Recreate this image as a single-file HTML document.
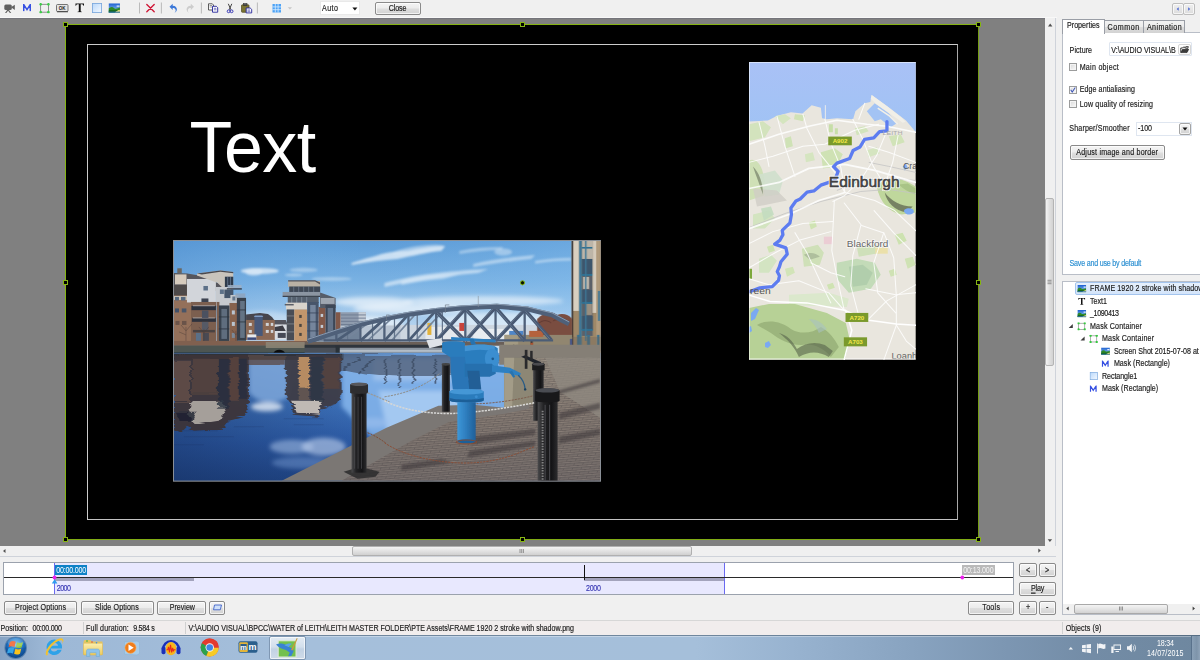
<!DOCTYPE html>
<html><head><meta charset="utf-8"><title>Objects and animation</title>
<style>
*{box-sizing:border-box;margin:0;padding:0}
html,body{width:1200px;height:660px;overflow:hidden;background:#f0f0f0}
body{position:relative;font-family:"Liberation Sans",sans-serif;font-size:7.1px;color:#1a1a1a;line-height:1}
.a{position:absolute}
.t{position:absolute;white-space:nowrap;line-height:10px;height:10px;-webkit-text-stroke:.15px currentColor;margin-top:.65px;transform:scaleY(1.180);transform-origin:0 50%}
.btn{position:absolute;border:1px solid #8a8a8a;border-radius:2px;background:linear-gradient(#f4f4f4 0%,#ececec 48%,#dedede 52%,#d2d2d2 100%);box-shadow:inset 0 0 0 1px rgba(255,255,255,.7)}
.cb{position:absolute;width:8px;height:8px;border:1px solid #9b9c9c;background:linear-gradient(135deg,#d8d8d8,#fbfbfb);box-shadow:inset 0 0 0 1px #f4f4f4}
svg{position:absolute;overflow:visible}
</style></head><body>

<svg width="0" height="0" style="position:absolute"><defs>
<linearGradient id="gSky" x1="0" y1="0" x2="0" y2="1"><stop offset="0" stop-color="#1d5fd0"/><stop offset="1" stop-color="#9fd4f6"/></linearGradient>
<linearGradient id="gRect" x1="0" y1="0" x2="1" y2="1"><stop offset="0" stop-color="#b9d8fb"/><stop offset="1" stop-color="#f4f9ff"/></linearGradient>
<symbol id="iPic" viewBox="0 0 12 10"><rect x="0" y="0" width="12" height="10" fill="url(#gSky)"/><path d="M0 5.500C2 3.500 4 3.300 6 5.200 8 6.500 10 5 12 4.500V10H0z" fill="#2f8a2a"/><path d="M0 7.500C3 6.500 6 8.500 12 6.500V10H0z" fill="#12641a"/><path d="M6.500 10C8 8 10 7 12 6.800V10z" fill="#e6e07a"/><rect x="0" y="8.800" width="12" height="1.200" fill="#3573c9"/><path d="M8.500 2.200h3v1.500h-3z" fill="#fff" opacity=".85"/></symbol>
<symbol id="iMC" viewBox="0 0 12 12"><rect x="1.500" y="1.500" width="9" height="9" fill="none" stroke="#8a8a8a" stroke-width="1"/><g fill="#35c93f"><rect x="0" y="0" width="3" height="3" rx=".8"/><rect x="9" y="0" width="3" height="3" rx=".8"/><rect x="0" y="9" width="3" height="3" rx=".8"/><rect x="9" y="9" width="3" height="3" rx=".8"/></g></symbol>
<symbol id="iMCs" viewBox="0 0 12 12"><rect x="1.500" y="1.500" width="9" height="9" fill="none" stroke="#808080" stroke-width="1"/><g fill="#3ccc48"><circle cx="1.500" cy="1.500" r="1.550"/><circle cx="10.500" cy="1.500" r="1.550"/><circle cx="1.500" cy="10.500" r="1.550"/><circle cx="10.500" cy="10.500" r="1.550"/></g></symbol>
<symbol id="iRect" viewBox="0 0 12 12"><rect x=".5" y=".5" width="11" height="11" fill="url(#gRect)" stroke="#7aa7dd" stroke-width="1"/></symbol>
<symbol id="iM" viewBox="0 0 10 9"><path d="M1.100 8.600V.7L5 6.800 8.900.7V8.600" fill="none" stroke="#3650e2" stroke-width="1.750" stroke-linejoin="miter"/></symbol>
<symbol id="iT" viewBox="0 0 10 10"><path d="M.5.500h9v2.500h-.6C8.600 1.700 8.100 1.300 6 1.300v6.900c0 .8.300 1 1.400 1.100v.5H2.600v-.5C3.700 9.200 4 9 4 8.200V1.300C1.900 1.300 1.400 1.700 1.100 3H.5z" fill="#111"/></symbol>
</defs></svg>

<!-- canvas pane -->
<div class="a" style="left:0;top:18px;width:1045px;height:528px;background:#808080"></div>
<div class="a" style="left:0;top:17px;width:1057px;height:1px;background:#f8f8f8"></div>
<div class="a" style="left:0;top:18px;width:1045px;height:1px;background:#75757b"></div>
<!-- scrollbars of canvas pane -->
<div class="a" style="left:1045px;top:18px;width:11px;height:539px;background:#f0f0f0;border-right:1px solid #cfd3da"></div>
<div class="a" style="left:0;top:546px;width:1056px;height:11px;background:#f0f0f0;border-bottom:1px solid #cfd3da"></div>
<div class="a" style="left:1045px;top:198px;width:9px;height:168px;border:1px solid #b4b4b4;border-radius:2px;background:linear-gradient(90deg,#f3f3f3,#e0e0e0 50%,#d2d2d2)"></div>
<div class="a" style="left:352px;top:546px;width:340px;height:10px;border:1px solid #b0b0b0;border-radius:2px;background:linear-gradient(#f3f3f3,#e2e2e2 50%,#d0d0d0)"></div>
<svg style="left:0;top:0" width="1200" height="660" viewBox="0 0 1200 660">
 <g fill="#505050">
  <path d="M1048 26.5l2.2-3 2.2 3z"/>
  <path d="M1047.7 539.3l2.2 2.6 2.2-2.6z"/>
  <path d="M3 551l2.5-2v4z"/>
  <path d="M1040.8 550.6l-2.5-2.2v4.4z"/>
 </g>
 <g stroke="#707070" stroke-width=".7">
  <path d="M1047.5 280.3h4M1047.5 282h4M1047.5 283.7h4"/>
  <path d="M520 549v4M521.7 549v4M523.4 549v4"/>
 </g>
</svg>

<!-- toolbar -->
<svg style="left:0;top:0" width="440" height="18" viewBox="0 0 440 18">
 <!-- camera -->
 <g fill="#606060"><rect x="4.300" y="4.500" width="7.500" height="5.500" rx="1.500"/><path d="M11 7.300l3.800-2.600v5.200L11 7.300z"/><path d="M7.500 9.500h1.200l2.500 3.600h-1.300L8.100 10.700 6.300 13.100H5z"/></g>
 <use href="#iM" x="22.500" y="4" width="9" height="7.500"/>
 <use href="#iMCs" x="39.300" y="3" width="10.500" height="10.500"/>
 <!-- ok button -->
 <rect x="56.500" y="4.500" width="11.500" height="7" rx="1" fill="#e4e4e4" stroke="#555" stroke-width=".8"/><path d="M57 11.800h11" stroke="#333" stroke-width=".8"/><text x="62.200" y="10" font-size="4.500" font-weight="bold" text-anchor="middle" fill="#222" font-family="Liberation Sans">OK</text>
 <use href="#iT" x="75" y="3" width="9.500" height="9.500"/>
 <use href="#iRect" x="92" y="3" width="10" height="10"/>
 <use href="#iPic" x="108.500" y="3.300" width="11.500" height="9.500"/>
 <g stroke="#b4b4b4" stroke-width=".9"><path d="M139.500 2.500v11M161.400 2.500v11M201.400 2.500v11M257.400 2.500v11"/></g>
 <!-- X -->
 <path d="M146.800 4.500l7.400 7.300M154.200 4.500l-7.400 7.300" stroke="#cf1736" stroke-width="1.350" stroke-linecap="round"/>
 <!-- undo -->
 <path d="M169.500 6.800l3.200-3v1.900c3 .1 4.300 1.700 4.200 3.900-.1 1.600-1 2.800-2.600 3.400 1.200-1 1.500-2 1.300-3-.3-1.300-1.300-1.900-2.900-1.900v1.900z" fill="#3b78d8"/>
 <path d="M194 6.800l-3.200-3v1.900c-3 .1-4.300 1.700-4.200 3.900.1 1.600 1 2.800 2.600 3.400-1.200-1-1.500-2-1.300-3 .3-1.300 1.300-1.900 2.900-1.900v1.900z" fill="#cdcdcd"/>
 <!-- copy -->
 <g><path d="M208.500 3.800h3.800l1.200 1.200v5h-5z" fill="#fff" stroke="#333" stroke-width=".8"/><path d="M209.600 5.500h2.500M209.600 7h2.500" stroke="#555" stroke-width=".6"/><path d="M212.500 6.300h3.800l1.400 1.400v4.500h-5.200z" fill="#fff" stroke="#22229a" stroke-width=".9"/><path d="M213.800 8.300h2.500M213.800 9.800h2.700" stroke="#22229a" stroke-width=".6"/></g>
 <!-- scissors -->
 <g fill="none"><path d="M228.300 3.800l2.600 6M231.800 3.800l-2.600 6" stroke="#333" stroke-width=".9"/><circle cx="228.600" cy="11.300" r="1.400" stroke="#2a2ab0" stroke-width=".9"/><circle cx="231.600" cy="11.300" r="1.400" stroke="#2a2ab0" stroke-width=".9"/></g>
 <!-- paste -->
 <g><rect x="241.500" y="4.800" width="7.500" height="7.500" rx=".8" fill="#7b7432" stroke="#4a4520" stroke-width=".7"/><rect x="243.500" y="3.600" width="3.500" height="2" fill="#555" stroke="#222" stroke-width=".5"/><path d="M246.200 8h4l1.500 1.400v3.500h-5.500z" fill="#fff" stroke="#22229a" stroke-width=".9"/><path d="M247.500 10h2.500M247.500 11.300h2.800" stroke="#22229a" stroke-width=".6"/></g>
 <!-- grid -->
 <g><rect x="272.500" y="4" width="8.500" height="8.500" fill="#4da2f5"/><path d="M272.500 6.900h8.500M272.500 9.700h8.500M275.300 4v8.500M278.100 4v8.500" stroke="#d8ecff" stroke-width=".8"/></g>
 <path d="M287.800 7.200h4.200l-2.100 2.200z" fill="#c6c6c6"/>
</svg>
<div class="a" style="left:320px;top:1px;width:40px;height:14px;background:#fff;border:1px solid #e9e9e9"></div>
<svg style="left:352px;top:6.500px" width="6" height="4" viewBox="0 0 6 4"><path d="M.4.400h5L2.900 3.400z" fill="#111"/></svg>
<div class="btn" style="left:375px;top:2px;width:46px;height:13px"></div>

<!-- right panel: nav buttons -->
<div class="btn" style="left:1172px;top:3px;width:12px;height:12px;border-color:#bdbdbd;background:linear-gradient(#efefef,#dcdcdc)"></div>
<div class="btn" style="left:1183px;top:3px;width:12px;height:12px;border-color:#bdbdbd;background:linear-gradient(#efefef,#dcdcdc)"></div>
<svg style="left:0;top:0" width="1200" height="40" viewBox="0 0 1200 40"><g fill="#4a66d2"><path d="M1176.700 9l2-1.700v3.400z"/><path d="M1190.200 9l-2-1.700v3.400z"/></g></svg>
<!-- tab panel -->
<div class="a" style="left:1062px;top:32px;width:140px;height:243px;background:#fff;border:1px solid #b9bec7"></div>
<div class="a" style="left:1104px;top:20px;width:40px;height:13px;border:1px solid #9a9ea6;border-bottom:none;background:linear-gradient(#f2f2f2,#ebebeb 50%,#dcdcdc 52%,#d3d3d3)"></div>
<div class="a" style="left:1143px;top:20px;width:42px;height:13px;border:1px solid #9a9ea6;border-bottom:none;background:linear-gradient(#f2f2f2,#ebebeb 50%,#dcdcdc 52%,#d3d3d3)"></div>
<div class="a" style="left:1062px;top:19px;width:43px;height:15px;border:1px solid #9a9ea6;border-bottom:none;background:#fff"></div>
<!-- picture input -->
<div class="a" style="left:1109px;top:42px;width:83px;height:14px;background:#fff;border:1px solid #dfe6f0;border-radius:1px"></div>
<div class="btn" style="left:1177.500px;top:43.500px;width:13px;height:11.500px;border-color:#d6d6d6;background:linear-gradient(#fefefe,#f1f1f1)"></div>
<svg style="left:1179.500px;top:44.800px" width="9.500" height="8.500" viewBox="0 0 10 9"><path d="M.8 8V3.200h1.800l.8-.9h2V3.200H7.600v1.300" fill="#fff" stroke="#1a1a1a" stroke-width=".9"/><path d="M.9 8l1.800-3.500h6.500L7.400 8z" fill="#3a3a3a" stroke="#111" stroke-width=".6"/><path d="M5.300 2c1-1.300 2.300-1.400 3.200-.4l.6-.5v1.800H7.400l.6-.6c-.6-.7-1.500-.7-2.300-.1z" fill="#222"/></svg>
<!-- checkboxes -->
<div class="cb" style="left:1069px;top:63px"></div>
<div class="cb" style="left:1069px;top:85.500px"></div>
<div class="cb" style="left:1069px;top:99.500px"></div>
<svg style="left:1069px;top:85.500px" width="8" height="8" viewBox="0 0 8 8"><path d="M1.700 3.700l1.500 2.300L6.300 1.500" fill="none" stroke="#4058b8" stroke-width="1.050"/></svg>
<!-- sharper combo -->
<div class="a" style="left:1136px;top:121.500px;width:56px;height:14px;background:#fff;border:1px solid #dfe6f0"></div>
<div class="btn" style="left:1179px;top:122.500px;width:12px;height:12px;border-color:#a4a4a4"></div>
<svg style="left:1182px;top:127px" width="6" height="4" viewBox="0 0 6 4"><path d="M.5.500h5L3 3.500z" fill="#111"/></svg>
<!-- adjust button -->
<div class="btn" style="left:1070px;top:145px;width:95px;height:15px"></div>
<!-- tree box -->
<div class="a" style="left:1062px;top:280.500px;width:140px;height:334px;background:#fff;border:1px solid #b9bec7"></div>
<div class="a" style="left:1075px;top:282px;width:127px;height:12.700px;background:linear-gradient(#e6f0fc,#d3e4fa);border:1px solid #a3c4ee;border-radius:2px"></div>
<!-- tree h-scroll -->
<div class="a" style="left:1063px;top:603.500px;width:137px;height:10px;background:#f0f0f0"></div>
<div class="a" style="left:1074px;top:603.500px;width:94px;height:10px;border:1px solid #a9a9a9;border-radius:2px;background:linear-gradient(#f4f4f4,#e4e4e4 50%,#d2d2d2)"></div>
<svg style="left:0;top:0" width="1200" height="660" viewBox="0 0 1200 660"><g fill="#404040"><path d="M1066.300 608.500l2.400-2v4z"/><path d="M1195 608.500l-2.400-2v4z"/></g><path d="M1119.500 606.500v4M1121 606.500v4M1122.500 606.500v4" stroke="#707070" stroke-width=".7"/>
<g fill="#3c3c3c"><path d="M1072.800 328.100v-4.100l-4.100 4.100z"/><path d="M1084.600 340.600v-4.100l-4.100 4.100z"/></g></svg>

<!-- timeline -->
<div class="a" style="left:3px;top:562px;width:1011px;height:33px;background:#fff;border:1px solid #9ba2ad"></div>
<div class="a" style="left:54px;top:563px;width:671px;height:31px;background:#e8e8fe;border-left:1px solid #6a6af0;border-right:1px solid #6a6af0"></div>
<div class="a" style="left:4px;top:577px;width:1009px;height:1px;background:#2a2a2a"></div>
<div class="a" style="left:55px;top:578px;width:139px;height:3px;background:#a3a3bc"></div>
<div class="a" style="left:584px;top:578px;width:140px;height:3px;background:#a3a3bc"></div>
<div class="a" style="left:584px;top:565px;width:1px;height:15px;background:#111"></div>
<div class="a" style="left:55px;top:565px;width:32px;height:9.500px;background:#0e82c6"></div>
<div class="a" style="left:962px;top:565px;width:32.500px;height:9.500px;background:#b9b9b9"></div>
<svg style="left:0;top:0" width="1200" height="660" viewBox="0 0 1200 660"><path d="M54.600 579.200l2.800 4.400h-5.600z" fill="#2f9cf0"/><circle cx="54.500" cy="577.500" r="1.900" fill="#ee22ee"/><circle cx="962.300" cy="577.500" r="1.900" fill="#ee22ee"/></svg>
<!-- timeline buttons -->
<div class="btn" style="left:1019px;top:563px;width:18px;height:14px"></div>
<div class="btn" style="left:1038.500px;top:563px;width:17.500px;height:14px"></div>
<div class="btn" style="left:1019px;top:581.500px;width:37px;height:14.500px"></div>
<div class="btn" style="left:1019px;top:600.500px;width:18px;height:14px"></div>
<div class="btn" style="left:1038.500px;top:600.500px;width:17.500px;height:14px"></div>
<div class="btn" style="left:968px;top:600.500px;width:45.500px;height:14px"></div>
<div class="btn" style="left:4px;top:600.500px;width:73px;height:14px"></div>
<div class="btn" style="left:81px;top:600.500px;width:72.500px;height:14px"></div>
<div class="btn" style="left:157px;top:600.500px;width:48.500px;height:14px"></div>
<div class="btn" style="left:209px;top:600.500px;width:16px;height:14px"></div>
<svg style="left:212.500px;top:604px" width="9" height="7" viewBox="0 0 9 7"><path d="M1.500 1h7L7.300 5.800H.5z" fill="#cfe0fa" stroke="#3f63c8" stroke-width=".9"/></svg>
<!-- status bar -->
<div class="a" style="left:0;top:620px;width:1200px;height:1px;background:#d7d7d7"></div>
<div class="a" style="left:0;top:621px;width:1200px;height:14px;background:#f1eded"></div>
<div class="a" style="left:82.500px;top:622px;width:1px;height:12px;background:#d0d0d0"></div>
<div class="a" style="left:185px;top:622px;width:1px;height:12px;background:#d0d0d0"></div>
<div class="a" style="left:1061.500px;top:622px;width:1px;height:12px;background:#d0d0d0"></div>

<!-- taskbar -->
<div class="a" style="left:0;top:635px;width:1200px;height:25px;background:linear-gradient(90deg,#86a2c3 0,#9db8d6 4%,#a5bfdb 25%,#a5bfda 58%,#98b3d0 66%,#88a3c0 76%,#7c96b2 84%,#738ca6 91%,#6e879f 100%)"></div>
<div class="a" style="left:0;top:635px;width:1200px;height:1px;background:rgba(70,90,110,.55)"></div>
<div class="a" style="left:0;top:636px;width:1200px;height:1px;background:rgba(255,255,255,.35)"></div>
<!-- active app button -->
<div class="a" style="left:268.500px;top:636px;width:37px;height:23.500px;border:1px solid #7f97b3;border-radius:2px;background:linear-gradient(#e3ebf4,#d3dfec 45%,#c2d2e4 55%,#cfdbe9);box-shadow:inset 0 0 0 1px rgba(255,255,255,.65)"></div>
<!-- show desktop -->
<div class="a" style="left:1191px;top:636px;width:9px;height:24px;border-left:1px solid #5a728c;background:linear-gradient(90deg,#8aa0b6,#7e94aa 60%,#8fa3b8)"></div>

<svg style="left:0;top:635px" width="1200" height="25" viewBox="0 635 1200 25">
<defs>
<radialGradient id="orb" cx=".5" cy=".35" r=".7"><stop offset="0" stop-color="#6fc3f5"/><stop offset=".55" stop-color="#1d6fc0"/><stop offset="1" stop-color="#0c3c78"/></radialGradient>
<linearGradient id="fold" x1="0" y1="0" x2="0" y2="1"><stop offset="0" stop-color="#fbefb0"/><stop offset="1" stop-color="#ecc95a"/></linearGradient>
</defs>
<!-- start orb -->
<circle cx="15.700" cy="647.800" r="11.300" fill="#2c5f95" opacity=".55"/>
<circle cx="15.700" cy="647.800" r="10.300" fill="url(#orb)"/>
<path d="M5.400 647.800a10.300 10.300 0 0 0 20.600 0z" fill="#0d4a92" opacity=".35"/>
<g transform="translate(15.900 647.700) scale(1.280) translate(-15 -647.700)"><path d="M10.300 643.200c1.600-.9 3-.9 4.600-.1l-1 4c-1.500-.7-2.900-.7-4.600.1z" fill="#ef5a24"/>
<path d="M15.900 643.400c1.600.8 3 .8 4.600-.1l-1 4c-1.600.9-3 .9-4.600.1z" fill="#8cc63e"/>
<path d="M9 648.300c1.600-.9 3-.9 4.600-.1l-1 4c-1.500-.7-2.900-.7-4.600.1z" fill="#35a5e8"/>
<path d="M14.600 648.500c1.600.8 3 .8 4.600-.1l-1 4c-1.600.9-3 .9-4.600.1z" fill="#fbc21b"/></g>
<ellipse cx="15.700" cy="642.500" rx="8" ry="4.500" fill="#fff" opacity=".18"/>
<!-- IE -->
<g><path d="M54.300 639.500a7.800 7.800 0 1 0 7.400 10.300h-4.100a4 4 0 0 1-7.200-1.300h11.700a7.800 7.800 0 0 0-7.800-9zm-3.900 6.200a4 4 0 0 1 7.700 0z" fill="#2ea2e8"/><path d="M46.500 655.500c-2.500-2.500 1.500-9.500 7-13.800 4-3.100 8.500-4.400 9.700-2.300.6 1.100.1 2.700-1 4.300.6-1.700.5-2.800-.3-3.200-1.700-.8-5.600 1.200-8.700 4.200-4 4-6.500 8.700-5.200 10.200z" fill="#f2c12e"/></g>
<!-- explorer -->
<g><path d="M83.500 641.500l1-1.500h6l1.200 1.500h10.800v13h-19z" fill="#e7c661"/><rect x="83.500" y="643.200" width="19" height="11.800" rx=".8" fill="url(#fold)" stroke="#d6b350" stroke-width=".5"/><circle cx="87" cy="641" r=".8" fill="#27b14a"/><circle cx="92" cy="642" r=".8" fill="#e04a3a"/><circle cx="96.500" cy="642.800" r=".8" fill="#3a8fe0"/><path d="M86.500 656.500v-5.500c0-1.200.8-2 2-2h9c1.200 0 2 .8 2 2v5.500h-3.300v-3.800h-6.400v3.800z" fill="#8ec3ea" stroke="#6aa6d6" stroke-width=".5"/></g>
<!-- WMP -->
<g><path d="M124.500 642l12.500-1 2.500 1.500v11l-2.500 1.500-12.500-1z" fill="#a8cdea" stroke="#86b3d8" stroke-width=".5"/><circle cx="130.500" cy="647.800" r="5.600" fill="#f07d1a"/><circle cx="130.500" cy="647.800" r="5.600" fill="none" stroke="#f9b36a" stroke-width=".6"/><path d="M128.500 644.600l5.200 3.200-5.200 3.200z" fill="#fff"/></g>
<!-- audacity -->
<g><path d="M163 649.500a8 8.300 0 0 1 16 0" fill="none" stroke="#1b2fb8" stroke-width="2.300"/><rect x="161.500" y="646.500" width="4" height="7.800" rx="1.800" fill="#1b2fb8"/><rect x="176.500" y="646.500" width="4" height="7.800" rx="1.800" fill="#1b2fb8"/><ellipse cx="171" cy="648.700" rx="5.300" ry="6.600" fill="#f8b51a"/><path d="M166.500 649.800h1.200l.8-3 1 5.600 1-7.500 1.200 7.500.9-4.600.8 3 .7-1h1.400" fill="none" stroke="#e8281c" stroke-width="1.100"/></g>
<!-- chrome -->
<g><circle cx="209.700" cy="647.500" r="9" fill="#e33b2e"/><path d="M209.700 647.500L201.900 643a9 9 0 0 0 4.500 12.900z" fill="#2ba24c"/><path d="M209.700 647.500h9a9 9 0 0 1-12.300 8.400z" fill="#f7cb26"/><path d="M201.900 643a9 9 0 0 1 16.800 4.500h-9z" fill="#e33b2e"/><circle cx="209.700" cy="647.500" r="4.200" fill="#f4f4f4"/><circle cx="209.700" cy="647.500" r="3.300" fill="#3f87e5"/></g>
<!-- mm -->
<g><rect x="238.500" y="641.300" width="19" height="11.500" rx="2" fill="#2b5f8c"/><rect x="239.300" y="642.200" width="8.500" height="9.700" rx="1" fill="#e3b53a"/><rect x="240.500" y="644" width="6.200" height="6" fill="#2b5f8c"/><text x="243.600" y="649.800" font-size="7.500" font-weight="bold" fill="#fff" text-anchor="middle" font-family="Liberation Sans">m</text><text x="252.500" y="650.300" font-size="9" font-weight="bold" fill="#fff" text-anchor="middle" font-family="Liberation Sans">m</text></g>
<!-- PTE -->
<g><rect x="278.200" y="640.800" width="17.800" height="16.200" fill="#72c04e" stroke="#dfe9d8" stroke-width="1"/><path d="M276 644.500c3.500-1.500 7.500-1 10.500.8l5.800 3.200c1.200.8 1.600 2 1 3.400l-2 4-3.200.4 1.600-3.800-3.800-2.600c-3.200-.4-6.900-2.200-9.900-5.400z" fill="#3a82d2"/><path d="M284.500 645.300c2.200-1.600 4.800-2.100 7.300-1.500l-3.200 3.200z" fill="#5aa2ea"/><path d="M291 650l5.800-12 .8.400-5 12.200z" fill="#c99a3c"/></g>
<!-- tray -->
<g fill="#fff" opacity=".9"><path d="M1068.600 649.500l2.200-2.600 2.200 2.600z"/>
<path d="M1082 645.300l3.800-.6v3.500H1082zM1086.500 644.600l4.500-.7v4.300h-4.500zM1082 648.900h3.800v3.500l-3.800-.6zM1086.500 648.900h4.500v4.300l-4.500-.7z"/>
<path d="M1097 643.500h.9v10h-.9z"/><path d="M1098.200 644c1.500-.8 2.700-.6 3.700 0 1 .6 2.200.6 3.500 0v4.500c-1.300.6-2.500.6-3.500 0-1-.6-2.200-.8-3.700 0z"/>
<path d="M1113.500 644.500h7.500v5.500h-7.500zm.9.900v3.700h5.700v-3.700z"/><path d="M1115.500 651h3.500v.9h-3.500zM1111.300 646.500h2.200v6.500h-2.200z"/>
<path d="M1127 646.300h2l2.800-2.500v8.400l-2.800-2.500h-2z"/></g>
<g fill="none" stroke="#fff" stroke-width=".7"><path d="M1133 645.800c.9 1.400.9 2.800 0 4.400"/><path d="M1134.400 644.600c1.500 2.200 1.500 4.400 0 6.800"/></g>
</svg>

<!-- slide -->
<div class="a" style="left:65px;top:24px;width:914px;height:516px;background:#000;border:1px solid #86b414;border-right-color:#759d14;border-bottom-color:#80ac14"></div>
<div class="a" style="left:87px;top:44px;width:871px;height:476px;border:1px solid #cbcbcb;border-right-color:#a9a9a9;border-bottom-color:#c2c2c2"></div>
<div class="a" id="bigtext" style="left:189.400px;top:107.500px;font-size:70px;line-height:80px;color:#fff;white-space:nowrap;letter-spacing:-.5px;transform:scaleY(1.036);transform-origin:0 63px">Text</div>

<svg id="photo" style="left:173.100px;top:240.200px;overflow:hidden" width="428" height="241.700" viewBox="-1 -1 429 242" preserveAspectRatio="none">
<defs>
<linearGradient id="pSky" x1="0" y1="0" x2="0" y2="1"><stop offset="0" stop-color="#5d9cd7"/><stop offset=".35" stop-color="#7ab2e3"/><stop offset=".62" stop-color="#a6cbec"/><stop offset=".85" stop-color="#cfe1f1"/><stop offset="1" stop-color="#dde8f2"/></linearGradient>
<linearGradient id="pSkyR" x1="0" y1="0" x2="1" y2="0"><stop offset="0" stop-color="#4f8ed0" stop-opacity=".35"/><stop offset=".45" stop-color="#7ab6ea" stop-opacity="0"/><stop offset="1" stop-color="#8cc4f2" stop-opacity=".35"/></linearGradient>
<linearGradient id="pWater" x1="0" y1="0" x2="0" y2="1"><stop offset="0" stop-color="#6398d8"/><stop offset=".35" stop-color="#4279c2"/><stop offset=".7" stop-color="#2d5ca8"/><stop offset="1" stop-color="#214788"/></linearGradient>
<linearGradient id="pWaterL" x1="0" y1="0" x2="1" y2="0"><stop offset="0" stop-color="#10244e" stop-opacity=".4"/><stop offset=".5" stop-color="#10244e" stop-opacity="0"/></linearGradient>
<linearGradient id="pCob" x1="0" y1="0" x2="0" y2="1"><stop offset="0" stop-color="#968c80"/><stop offset=".45" stop-color="#857a72"/><stop offset="1" stop-color="#746c6a"/></linearGradient>
<linearGradient id="pBol" x1="0" y1="0" x2="1" y2="0"><stop offset="0" stop-color="#4a4a4c"/><stop offset=".3" stop-color="#222224"/><stop offset=".7" stop-color="#141416"/><stop offset="1" stop-color="#2c2c2e"/></linearGradient>
<linearGradient id="pCap" x1="0" y1="0" x2="1" y2="0"><stop offset="0" stop-color="#3d97d8"/><stop offset=".45" stop-color="#2f7fc0"/><stop offset="1" stop-color="#1f5f98"/></linearGradient>
<filter id="b1" x="-20%" y="-20%" width="140%" height="140%"><feGaussianBlur stdDeviation="1"/></filter>
<filter id="b2" x="-20%" y="-40%" width="140%" height="180%"><feGaussianBlur stdDeviation="2.2"/></filter>
<filter id="rip" x="-10%" y="-10%" width="120%" height="130%"><feTurbulence type="fractalNoise" baseFrequency="0.015 0.35" numOctaves="2" seed="4" result="n"/><feDisplacementMap in="SourceGraphic" in2="n" scale="7" xChannelSelector="R" yChannelSelector="G"/><feGaussianBlur stdDeviation=".7"/></filter>
<filter id="b05" x="-5%" y="-5%" width="110%" height="110%"><feGaussianBlur stdDeviation=".45"/></filter>
<pattern id="cob" width="9" height="4.500" patternUnits="userSpaceOnUse" patternTransform="rotate(-4) skewX(-25)"><rect width="9" height="4.500" fill="none"/><path d="M0 .3h9M0 2.550h9" stroke="#3f3a3c" stroke-width=".7" opacity=".55"/><path d="M2 0v2.300M6.500 2.500v2" stroke="#3f3a3c" stroke-width=".6" opacity=".45"/><path d="M.5 1.300h8" stroke="#b0a69a" stroke-width=".6" opacity=".25"/></pattern>
<clipPath id="pc"><rect x="0" y="0" width="427" height="240"/></clipPath>
</defs>
<rect x="-1" y="-1" width="429" height="242" fill="#8a8f96"/>
<g clip-path="url(#pc)">
<!-- SKY -->
<rect x="0" y="0" width="427" height="118" fill="url(#pSky)"/>
<rect x="0" y="0" width="427" height="118" fill="url(#pSkyR)"/>
<g fill="#fff" filter="url(#b1)" opacity=".72">
 <ellipse cx="86" cy="30" rx="19" ry="3" opacity=".85"/><ellipse cx="80" cy="31" rx="9" ry="3.500" opacity=".8"/>
 <ellipse cx="130" cy="29" rx="14" ry="2.200" opacity=".45"/><ellipse cx="120" cy="34" rx="9" ry="1.500" opacity=".5"/>
 <ellipse cx="158" cy="38" rx="20" ry="2" opacity=".45"/>
 <path d="M178 22c8-3 18-5 30-9 8-2 16-3 26-3 10-2 25-5 38-5l-4 5c-14 1-28 5-44 8-14 1-30 3-46 6z" opacity=".9"/>
 <ellipse cx="245" cy="9" rx="26" ry="4" opacity=".55" transform="rotate(-8 245 9)"/>
 <path d="M286 10c14-3 30-4 44-4l-2 3c-14 0-28 2-42 4z" opacity=".5"/>
 <ellipse cx="330" cy="11" rx="9" ry="3.500" opacity=".5"/>
 <path d="M300 23c20-5 40-7 62-9l-4 4c-20 2-38 5-58 8z" opacity=".6"/>
 <path d="M362 20c12-2 24-3 36-3v2.500c-12 0-24 1-36 3z" opacity=".6"/>
 <path d="M211 42c30-8 60-12 104-14l-10 4c-34 3-64 8-94 14z" opacity=".7"/>
 <path d="M228 40c14-4 34-7 60-7l-18 5c-14 1-28 3-42 6z" opacity=".6"/>
</g>
<g fill="#fff" filter="url(#b2)">
 <ellipse cx="200" cy="61" rx="40" ry="5" opacity=".6"/>
 <ellipse cx="310" cy="60" rx="80" ry="5" opacity=".55"/>
 <ellipse cx="240" cy="68" rx="60" ry="5" opacity=".6"/>
 <ellipse cx="180" cy="82" rx="50" ry="8" opacity=".55"/>
 <ellipse cx="90" cy="80" rx="30" ry="10" opacity=".3"/>
 <ellipse cx="330" cy="80" rx="70" ry="9" opacity=".5"/>
</g>
<!-- BUILDINGS -->
<g filter="url(#b05)">
<!-- far office block -->
<rect x="167.300" y="71.300" width="25" height="16" fill="#8f9cae"/><rect x="185" y="71.300" width="7.300" height="16" fill="#c5cdd6"/><path d="M167.300 74h25M167.300 77.200h25M167.300 80.400h25M167.300 83.600h25" stroke="#6b7a90" stroke-width=".9"/>
<!-- distant ships / cranes seen through bridge -->
<rect x="190" y="84" width="190" height="18" fill="#cdd6e0"/>
<rect x="252" y="86" width="40" height="14" fill="#e4e8ec"/><rect x="254" y="82" width="4" height="12" fill="#e2b23a"/><rect x="286" y="82" width="5" height="8" fill="#c8423a"/><rect x="300" y="88" width="40" height="10" fill="#e9edf1"/><rect x="336" y="90" width="14" height="6" fill="#4f86c8"/>
<!-- left group -->
<rect x="3.300" y="27.300" width="4.500" height="5" fill="#6a6662"/>
<path d="M0 31.900L13.200 32.600 28.300 34.900 43.500 41.700 54 46.300V50H0z" fill="#57565c"/>
<rect x="1" y="33.400" width="11.500" height="10" fill="#d6cbbd"/>
<path d="M0 44h14l4 5v6H0z" fill="#4e4a48"/>
<rect x="0" y="54.500" width="17.500" height="46.500" fill="#94705a"/>
<rect x="0" y="55" width="17.500" height="4" fill="#c9c0b4"/>
<rect x="1" y="56" width="4" height="3.500" fill="#55687e"/><rect x="7" y="56" width="4.500" height="3.500" fill="#55687e"/>
<rect x="1" y="67.500" width="4" height="4" fill="#3f5068"/><rect x="7.800" y="67.500" width="4.600" height="4" fill="#4a5568"/>
<rect x="1.500" y="80" width="4" height="4" fill="#6a5248"/><rect x="8" y="80" width="4.500" height="4" fill="#6a5248"/>
<rect x="13" y="38" width="29" height="23.500" fill="#d2d5da"/>
<rect x="29.500" y="45" width="4.500" height="4.500" fill="#5b6f88"/>
<rect x="27.500" y="57.500" width="7" height="8" fill="#3c4250"/>
<path d="M23 32.600L46.500 29.600 59.400 31.100V48H50l-6.500-6.300L23 34.500z" fill="#c9c4bc"/>
<path d="M23 32.400L46.500 29.400 59.400 30.900v1.300L46.500 30.800 28 33.400z" fill="#4a4a50"/>
<rect x="51" y="35.700" width="8.400" height="10.600" fill="#2d3a4c"/><path d="M53.800 35.700v10.600M56.600 35.700v10.600" stroke="#8ea2ba" stroke-width=".5"/>
<rect x="42" y="46" width="15" height="19" fill="#c6cacf"/><rect x="46" y="48.500" width="4" height="4.500" fill="#5d7189"/>
<path d="M54 44h13.700v3.500H54z" fill="#9db0c6" opacity=".85"/><rect x="53" y="47.300" width="15" height="1.300" fill="#2f3540"/>
<rect x="50.500" y="48.600" width="9" height="8.500" fill="#44566c"/>
<rect x="17" y="61" width="25.500" height="40" fill="#7c5e50"/>
<rect x="17.500" y="65" width="24.500" height="4.200" fill="#2f333c"/><rect x="18" y="77.300" width="24" height="3.600" fill="#2f333c"/><rect x="19" y="89" width="22" height="2.500" fill="#4a4242"/>
<path d="M19 64.800h22M19 77h22" stroke="#c8ccd2" stroke-width=".6"/>
<rect x="28" y="69.500" width="6.500" height="7.500" fill="#4b5160"/><rect x="28" y="81" width="6.500" height="8" fill="#565a66"/><rect x="22" y="92" width="5" height="8" fill="#5a7088"/><rect x="29" y="92" width="6" height="8" fill="#4a4a52"/>
<rect x="43" y="61" width="2.500" height="40" fill="#7c5e50"/>
<rect x="45" y="64.500" width="10.600" height="36" fill="#38434f"/><rect x="47.500" y="68" width="5.600" height="30" fill="#7d90a6" opacity=".55"/><path d="M45 76h10.600M45 88h10.600" stroke="#2a323c" stroke-width=".8"/>
<rect x="55.600" y="62" width="8" height="39" fill="#86624e"/><rect x="58" y="69.500" width="3" height="4" fill="#b9c4d0"/><rect x="58" y="81" width="3" height="4" fill="#b9c4d0"/><rect x="58" y="92" width="3" height="5" fill="#7a8898"/>
<rect x="56.500" y="54" width="8" height="8" fill="#c4c8cc"/><rect x="58.500" y="55.500" width="3" height="4" fill="#65788e"/>
<rect x="61.500" y="52.500" width="10" height="4.500" fill="#8fa3ba" opacity=".8"/>
<rect x="63" y="56.900" width="9.200" height="43" fill="#37404c"/><rect x="66.300" y="60" width="4.600" height="37" fill="#8a9cb2" opacity=".55"/><path d="M63 69h9M63 81h9" stroke="#2a323c" stroke-width=".8"/>
<!-- low buildings -->
<path d="M72.200 73.500l14-1.500 8 1 4 3 3 4H72.200z" fill="#46454d"/>
<rect x="72.200" y="79" width="29" height="20" fill="#8a6854"/>
<rect x="80.600" y="76" width="8.300" height="19" fill="#46587a"/><path d="M80 76h9.500l-1-1.500h-7.500z" fill="#7f9cc6"/>
<rect x="75" y="82" width="3" height="3" fill="#cfd3d8"/><rect x="92" y="82" width="3" height="3" fill="#cfd3d8"/><rect x="97" y="82" width="2.500" height="3" fill="#cfd3d8"/><rect x="75" y="89" width="3" height="3" fill="#cfd3d8"/><rect x="92" y="89" width="3" height="3" fill="#cfd3d8"/><rect x="97" y="89" width="2.500" height="3" fill="#cfd3d8"/>
<path d="M101 79h11l2 5h-13z" fill="#55565e"/><rect x="101" y="83.500" width="12.500" height="15" fill="#d8dce2"/><path d="M101 86l8-1.500 3 5.500h-11z" fill="#3c3d45"/><rect x="104" y="92" width="8" height="5" fill="#454a56"/>
<rect x="73.500" y="93.500" width="9" height="5.500" fill="#e8eaec"/><rect x="73.500" y="96.500" width="9" height="2.500" fill="#3a4a7a"/>
<!-- central tower -->
<rect x="114.400" y="40" width="32" height="6" fill="#b9b1a5"/>
<path d="M114.400 40.500h27l5 3v-2l-5-2.300h-27z" fill="#55555b"/>
<rect x="115.500" y="45.500" width="31" height="5.500" fill="#3f4957"/><path d="M120 45.500v5.500M125 45.500v5.500M130 45.500v5.500M135 45.500v5.500M140 45.500v5.500" stroke="#8796a8" stroke-width=".5"/>
<rect x="108.900" y="51" width="37.500" height="4.600" fill="#8b95a2"/><rect x="108.900" y="54.800" width="37.500" height="1.200" fill="#3a404a"/>
<rect x="114" y="56" width="31" height="6" fill="#55606e"/><path d="M118 56v6M123 56v6M128 56v6M133 56v6" stroke="#98a5b6" stroke-width=".5"/>
<rect x="112.300" y="61.700" width="21.200" height="7" fill="#d9d4cc"/><rect x="111" y="63" width="9" height="1.500" fill="#5a5f68"/>
<rect x="113" y="68.500" width="7.500" height="31" fill="#4a4e56"/><path d="M113 75h7.500M113 83h7.500M113 91h7.500" stroke="#8a8e96" stroke-width=".7"/>
<rect x="120.500" y="68.500" width="13" height="31.500" fill="#c2966c"/>
<rect x="125.500" y="74" width="2.500" height="3" fill="#4c4640"/><rect x="125.500" y="83" width="2.500" height="3" fill="#4c4640"/><rect x="125.500" y="92" width="2.500" height="3" fill="#4c4640"/>
<rect x="133.500" y="61" width="11.500" height="39" fill="#46546a"/><rect x="136.500" y="64" width="5.500" height="33" fill="#93a6be" opacity=".6"/><path d="M133.500 72h11.500M133.500 81h11.500M133.500 90h11.500" stroke="#39445a" stroke-width=".8"/>
<rect x="145" y="66" width="7" height="33" fill="#80594a"/><rect x="147" y="73" width="2.500" height="3" fill="#c3ccd6"/><rect x="147" y="84" width="2.500" height="3" fill="#c3ccd6"/>
<path d="M146.400 51.500L162 57v10h-15.600z" fill="#565c68"/>
<path d="M147 57h14v6h-14z" fill="#bfc6ce" opacity=".7"/>
<rect x="151.900" y="64" width="10.100" height="30" fill="#3c4656"/><rect x="154" y="67" width="5.500" height="25" fill="#8497b0" opacity=".55"/>
<rect x="162" y="71.300" width="5" height="18" fill="#80594a"/>
<!-- hazy distance behind bridge -->
<rect x="167" y="85" width="60" height="17" fill="#b9c5d3"/>
<!-- quay wall / fence left -->
<rect x="0" y="100" width="134" height="5" fill="#80604f"/>
<path d="M0 104.600h134v10.500H0z" fill="#4d5551"/>
<path d="M0 111h134v4.500H0z" fill="#2f3735"/>
<path d="M99.500 113c1-5.500 11-5.500 12 0z" fill="#0b0f11"/>
<path d="M92 101h40v6H92z" fill="#8b8474" opacity=".9"/>
<!-- bare trees -->
<g stroke="#4a3a38" stroke-width=".6" opacity=".7"><path d="M12 100v-14M12 90l-5-6M12 90l6-7M12 94l-7-3M30 100v-12M30 92l-5-6M30 92l5-6M62 100v-10M62 94l-4-5M62 94l4-5"/></g>
<!-- right building -->
<rect x="398.700" y="0" width="29" height="112" fill="#9f8868"/>
<rect x="398.700" y="0" width="1.500" height="112" fill="#3c322c"/>
<rect x="400.200" y="0" width="5.800" height="70" fill="#d8cfc0"/>
<rect x="408.700" y="0" width="11" height="95" fill="#5c6068"/>
<rect x="408.700" y="0" width="11" height="18" fill="#bdb5a8"/>
<rect x="410" y="36" width="6" height="12" fill="#c4bbae"/><rect x="413" y="62" width="6" height="12" fill="#9a8f80"/>
<g fill="#3d566c"><rect x="408.700" y="18" width="11" height="16"/><rect x="408.700" y="49" width="11" height="13"/><rect x="408.700" y="75" width="11" height="14"/></g>
<g fill="#2f7092"><rect x="408.700" y="33" width="11" height="2"/><rect x="408.700" y="61" width="11" height="2"/><rect x="408.700" y="88" width="11" height="2"/><rect x="408.700" y="6" width="11" height="1.600"/></g>
<rect x="406" y="0" width="2.700" height="108" fill="#3f7796"/>
<rect x="412" y="0" width="1.500" height="100" fill="#3f7796"/>
<rect x="419.600" y="0" width="3.700" height="72" fill="#d4cabb"/>
<rect x="423.300" y="0" width="3.700" height="112" fill="#b09a7c"/><rect x="425" y="50" width="2" height="30" fill="#3f7796"/>
<rect x="404" y="94" width="2.500" height="12" fill="#3a6f8e"/><rect x="414" y="94" width="3" height="13" fill="#3a6f8e"/><rect x="424" y="94" width="2.500" height="12" fill="#3a6f8e"/>
<path d="M398.700 96h29v14h-29z" fill="#6a6258" opacity=".35"/>
<!-- stone wall + trees right of bridge -->
<path d="M364 78c6-6 14-8 20-4 6-2 12 0 15 4v16h-35z" fill="#7a4d40"/>
<path d="M366 82c4-3 8-3 12 0M380 80c4-2 8-2 12 1" stroke="#5a3630" stroke-width=".8" fill="none"/>
<rect x="331" y="94" width="68" height="13" fill="#91866f"/>
<path d="M331 94h14v14h-14z" fill="#a39a82"/>
<rect x="356" y="90" width="14" height="6" fill="#b5623c"/>
<path d="M331 106h96v12h-96z" fill="#807a72"/>
<rect x="357.500" y="100" width="2" height="6" fill="#3a3030"/><rect x="357.500" y="102" width="2.300" height="2.200" fill="#b5502a"/>
<path d="M397 98h2v8h-2z" fill="#3f4f8a"/>
<!-- railings near right path -->
<g stroke="#3c3838" stroke-width="1"><path d="M344 104v10M350 106v10M356 108v10"/></g>
<path d="M340 104l20 8" stroke="#55504c" stroke-width=".8"/>
</g>

<!-- BRIDGE -->
<g filter="url(#b05)">
<rect x="131" y="105" width="36" height="9" fill="#4a5058"/><rect x="166" y="105" width="110" height="9" fill="#8a949f"/><rect x="166" y="109" width="110" height="2" fill="#c5ced8" opacity=".7"/>
<path d="M134 101L186 84v16.500z" fill="#6a7b92" opacity=".9"/>
<path d="M131 101h200v4H131z" fill="#6a5f58"/>
<path d="M131 104h140v3H131z" fill="#2e343c"/>
<rect x="162" y="105" width="4" height="9" fill="#2b3038"/>
<path d="M169.7 100L193.8 82.9 M193.8 100L217.9 77.7 M217.9 100L242.0 73.4 M242.0 100L269.8 69.8" stroke="#74859b" stroke-width="1.600" fill="none"/>
<path d="M162.7 91.1V100 M186.8 83.7V100 M210.9 78.0V100 M235.0 73.5V100 M262.8 69.5V100 M292.0 66.8V100 M322.3 65.4V100 M351.5 67.8V100" stroke="#4f6079" stroke-width="2.300" fill="none"/>
<path d="M174.0 87.6V100 M199.0 80.7V100 M221.0 76.1V100 M243.8 72.1V100 M269.0 68.9V100" stroke="#63748b" stroke-width="1.200" fill="none"/>
<path d="M140 100L162.7 91.1 M162.7 100L186.8 83.7 M186.8 100L210.9 78.0 M210.9 100L235.0 73.5 M235.0 100L262.8 69.5" stroke="#4c5d76" stroke-width="2.800" fill="none"/>
<path d="M262.8 100L292.0 67.8M262.8 70.5L292.0 100 M292.0 100L322.3 66.4M292.0 67.8L322.3 100 M322.3 100L351.5 68.8M322.3 66.4L351.5 100 M351.5 68.8L378 99" stroke="#485972" stroke-width="3.600" fill="none"/>
<path d="M262.8 100L292.0 67.8M262.8 70.5L292.0 100 M292.0 100L322.3 66.4M292.0 67.8L322.3 100 M322.3 100L351.5 68.8M322.3 66.4L351.5 100 M351.5 68.8L378 99" stroke="#8192a8" stroke-width=".7" fill="none" opacity=".7" transform="translate(-.9,-.4)"/>
<path d="M150 99.500H380" stroke="#4c5d76" stroke-width="2.400"/>
<path d="M134 100.500 L150 95.3 L163 91.0 L176 87.0 L189 83.0 L200 80.5 L211 78.0 L224 75.5 L237.5 73.0 L250 71.3 L263 69.5 L275 68.3 L288 67.0 L305 66.2 L323.6 65.3 L340 66.8 L354 68.0 L366 70.9 L379 74.0 L388 78.8 L396 83.0" fill="none" stroke="#4f6079" stroke-width="5" stroke-linejoin="round"/>
<path d="M134 100.500 L150 95.3 L163 91.0 L176 87.0 L189 83.0 L200 80.5 L211 78.0 L224 75.5 L237.5 73.0 L250 71.3 L263 69.5 L275 68.3 L288 67.0 L305 66.2 L323.6 65.3 L340 66.8 L354 68.0 L366 70.9 L379 74.0 L388 78.8 L396 83.0" fill="none" stroke="#8a9bb0" stroke-width="1" stroke-linejoin="round" transform="translate(0,-2)"/>
<path d="M272 64v8M272 64h4" stroke="#707a88" stroke-width=".7" fill="none"/><path d="M305 55v11" stroke="#8a929e" stroke-width=".6"/><path d="M213 74v5M213 74h3" stroke="#707a88" stroke-width=".6" fill="none"/>
</g>
<!-- WATER -->
<rect x="0" y="112" width="427" height="128" fill="url(#pWater)"/>
<rect x="0" y="112" width="427" height="128" fill="url(#pWaterL)"/>
<!-- bright water area right of centre (sky reflection) -->
<g filter="url(#b2)">
 <path d="M75 116h40v40c-12 8-30 8-40-4z" fill="#7fa9dc" opacity=".8"/>
 <path d="M168 116h166v56l-76 14-60 10-30-30z" fill="#82b2ea" opacity=".9"/>
 <path d="M205 150h90v30l-80 16z" fill="#a9cbf3" opacity=".9"/>
 <path d="M200 118h100v22h-100z" fill="#a6c6ec" opacity=".7"/>
 <ellipse cx="93" cy="166" rx="16" ry="4.500" fill="#e6eef8" opacity=".8"/>
 <ellipse cx="118" cy="206" rx="22" ry="7" fill="#9db8e0" opacity=".6"/>
 <ellipse cx="150" cy="206" rx="22" ry="9" fill="#b5c9e8" opacity=".65"/>
 <ellipse cx="128" cy="222" rx="30" ry="6" fill="#6f93cc" opacity=".5"/>
 <ellipse cx="200" cy="182" rx="16" ry="5" fill="#9cc0ee" opacity=".6"/>
</g>
<rect x="0" y="113" width="170" height="6" fill="#2b3138"/>
<!-- left building reflection -->
<g filter="url(#rip)">
 <path d="M0 114h75v48l-4 14-16 4-6 8-28 2-8-4-6 6-7-4z" fill="#3c3438" opacity=".93"/>
 <path d="M0 120h16v42H0z" fill="#65504a" opacity=".8"/>
 <path d="M18 118h26v36H18z" fill="#57453f" opacity=".8"/>
 <path d="M56 116h9v44h-9z" fill="#5f473e" opacity=".7"/>
 <path d="M18 160h30l4 8-6 12-26 4-6-10z" fill="#b9b2ac" opacity=".85"/>
 <path d="M44 118h11v50H44zM65 118h8v40h-8z" fill="#27303e" opacity=".8"/>
 <path d="M2 172h20l-4 10H6z" fill="#1c2030" opacity=".8"/>
 <!-- centre tower reflection -->
 <path d="M112 114h56v38l-6 12-14 4-4 8-24-2-4-14-4-6z" fill="#3e3a42" opacity=".92"/>
 <path d="M125 116h10.500v31h-10.500z" fill="#bd9064" opacity=".95"/><path d="M125 147h10.500v12h-10.500z" fill="#6a5a52" opacity=".8"/>
 <path d="M150 118h16v30h-16z" fill="#59433c" opacity=".75"/>
 <path d="M118 160h30l-3 14-22-2z" fill="#cdc7bf" opacity=".9"/>
 <path d="M137 116h12v44h-12z" fill="#2a3444" opacity=".7"/>
 <!-- low buildings reflection -->
 <path d="M75 114h37v10H75z" fill="#5a4a48" opacity=".8"/>
 <!-- bridge reflection -->
 <path d="M168 114h160v8c-30 12-90 22-160 6z" fill="#4a5a72" opacity=".75"/>
 <g stroke="#3a4860" stroke-width="1.800" opacity=".75"><path d="M212 118v26M226 118v28M240 118v26M262 118v26M284 118v20M186 118l-16 10M200 118l-14 14"/></g>
</g>
<!-- ripples -->
<g stroke="#1b2f5e" stroke-width=".6" opacity=".35"><path d="M4 190h40M10 196h50M0 204h30M60 186h30M110 178h40M120 184h30"/></g>

<!-- QUAY -->
<!-- concrete edge + cobbles -->
<path d="M326 104h101v20H326z" fill="#857f76"/>
<path d="M108 240L213 187 265 165 300 164 331 167V117h96v123z" fill="#7b7774"/>
<path d="M168 240L238 200 276 181 331 173 356 168V117H427V240z" fill="url(#pCob)"/>
<path d="M168 240L238 200 276 181 331 173 356 168V117H427V240z" fill="url(#cob)"/>
<!-- right path lighter -->
<path d="M372 117h55v60l-40-26z" fill="#8f8880" opacity=".8"/>
<!-- stone kerb wall near capstan -->
<path d="M331 117h28l2 46-30 4z" fill="#8d8775"/>
<path d="M331 117h10l-2 48-8 2z" fill="#a39c88"/>
<!-- shadows on cobbles -->
<g filter="url(#b1)" fill="#3a3638" opacity=".55">
 <path d="M300 196l62-8v6l-64 10z"/><path d="M296 210l66-10v5l-68 12z"/>
 <path d="M386 172l41-10v6l-41 11z"/><path d="M386 196l41-8v6l-41 9z"/>
 <path d="M228 224l40-6 10 4-50 8z"/>
 <path d="M384 150l43-12v4l-43 12z"/>
</g>
<!-- bollard 1 (left, big) -->
<path d="M170 231l10-3h14l12 3-4 5-18 2z" fill="#2a2a2c" opacity=".85"/>
<rect x="178" y="148" width="15" height="84" fill="url(#pBol)"/>
<path d="M176.500 144c0-2.500 18-2.500 18 0v8c0 1.500-18 1.500-18 0z" fill="#2e2e30"/>
<ellipse cx="185.500" cy="143.500" rx="8.500" ry="1.800" fill="#58585c"/>
<g stroke="#4c4c50" stroke-width=".7"><path d="M181 156v72M184.500 156v72M188 156v72"/></g>
<!-- bollard 2 (small mid) -->
<rect x="268.500" y="124" width="8" height="47" fill="url(#pBol)"/><ellipse cx="272.500" cy="123.500" rx="4.300" ry="1.300" fill="#444"/>
<path d="M348 116l4-1.500 16 7-1 3.500z" fill="#20242c"/><rect x="351.600" y="109" width="2.700" height="19" fill="#2a2a2c"/><rect x="357" y="110" width="2.500" height="9" fill="#2a2a2c"/>
<!-- bollard 3 -->
<rect x="360" y="126" width="10.500" height="54" fill="url(#pBol)"/><path d="M359 123.500c0-2 12.500-2 12.500 0v6h-12.500z" fill="#1c1c1e"/><ellipse cx="365.200" cy="123.300" rx="6" ry="1.500" fill="#4a4a4e"/>
<!-- bollard 4 (right big) -->
<rect x="364.500" y="156" width="20" height="84" fill="url(#pBol)"/>
<path d="M362 150c0-3 24.500-3 24.500 0v10c0 2-24.500 2-24.500 0z" fill="#18181a"/>
<ellipse cx="374.200" cy="149.500" rx="12" ry="2.300" fill="#4a4c52"/>
<g stroke="#55555a" stroke-width=".8"><path d="M372 164v76M376.500 164v76"/></g>
<path d="M369.500 170v70" stroke="#9a9a9a" stroke-width="2" stroke-dasharray="1.500 1.200" opacity=".8"/>
<!-- chains -->
<g fill="none" stroke-dasharray="2.200 1">
 <path d="M194 152c8 3 14 6 22 9" stroke="#9a9a98" stroke-width="1.300"/>
 <path d="M211 160c24 12 56 14 80 12s50-6 70-10" stroke="#d8d8d6" stroke-width="1.500"/>
 <path d="M211 156c20-3 40-10 56-24" stroke="#8d8d8a" stroke-width="1"/>
 <path d="M194 192c6 2 12 6 18 10" stroke="#7a4e3a" stroke-width="1"/>
 <path d="M211 202c20 14 60 22 90 20s44-10 60-16" stroke="#8a4f38" stroke-width="1"/>
 <path d="M300 163c20 0 44-4 60-8" stroke="#7c5a4a" stroke-width=".9"/>
</g>
<!-- capstan -->
<g filter="url(#b05)">
 <path d="M253 99.500l15-2 2 6.500-14 3.500z" fill="#dfe3e8"/>
 <path d="M277.800 96.200l44.600 2.600v2.800l-44.600-2.200z" fill="#2c7fc0"/>
 <path d="M300 98l3 6h-5l-2-6z" fill="#2873b0"/>
 <path d="M268.700 102c6-2 16-2 23 0v15h-14l-9-6z" fill="#2a7cbc"/>
 <path d="M291.500 105.500c10-2.500 22-2.500 30 0l3 2v18l-3 2c-10 1.500-20 1.500-30 0z" fill="#2b7dbe"/>
 <path d="M291.500 105.500c10-2.500 22-2.500 30 0v5c-10-2-20-2-30 0z" fill="#4a9ad8" opacity=".8"/>
 <ellipse cx="318.800" cy="117.700" rx="7.200" ry="10" fill="#3b8ed0"/><circle cx="319.500" cy="118" r="1.300" fill="#1d5a8e"/>
 <path d="M277 116h14.500l2 14 4 18.600H279.500l-2-18z" fill="#2975b6"/>
 <path d="M291.500 123h27l4 4v6l-6 3h-25z" fill="#2670ae"/>
 <path d="M294 130h12l2 18.600h-12z" fill="#215f96"/>
 <path d="M318.700 124.500l18 2.500 11 5.500-1 3-11-3-17-1.500z" fill="#2d80c2"/>
 <path d="M336 131l4 6 2-1-3-6z" fill="#2873b0"/>
 <path d="M345 134.500c4 3.500 6.500 8 7 14" stroke="#2a5c86" stroke-width="1.300" fill="none"/>
 <circle cx="352" cy="148.600" r="1.200" fill="#1f3f5c"/>
 <path d="M276 151c0-3.300 34.500-3.300 34.500 0v8.500c0 3.300-34.500 3.300-34.500 0z" fill="#2c7cbc"/>
 <ellipse cx="293.200" cy="151" rx="17.200" ry="2.800" fill="#4597d6"/>
 <path d="M276 157c6 2.500 28 2.500 34.500 0v2.500c0 3.300-34.500 3.300-34.500 0z" fill="#1f5f98"/>
 <circle cx="303" cy="156" r="1.500" fill="#3b8ed0"/>
 <rect x="284" y="161.500" width="18.400" height="39" fill="url(#pCap)"/>
 <ellipse cx="293.200" cy="200.500" rx="9.200" ry="2" fill="#1f5f98"/>
 <ellipse cx="293.200" cy="201.300" rx="10.500" ry="2" fill="none" stroke="#8a4a30" stroke-width=".9"/>
</g>
</g>
</svg>

<svg id="map" style="left:749.300px;top:62px;overflow:hidden" width="166.700" height="297.600" viewBox="0 0 167 296.500" preserveAspectRatio="none">
<defs>
<linearGradient id="mSea" x1="0" y1="0" x2="0" y2="1"><stop offset="0" stop-color="#a9c1f6"/><stop offset="1" stop-color="#a0c3f4"/></linearGradient>
<filter id="mb" x="-10%" y="-10%" width="120%" height="120%"><feGaussianBlur stdDeviation=".7"/></filter>
<filter id="mb0" x="-5%" y="-5%" width="110%" height="110%"><feGaussianBlur stdDeviation=".3"/></filter>
<filter id="mb2" x="-20%" y="-20%" width="140%" height="140%"><feGaussianBlur stdDeviation="1.600"/></filter>
<filter id="halo" x="-10%" y="-30%" width="120%" height="160%"><feMorphology in="SourceAlpha" operator="dilate" radius="1"/><feGaussianBlur stdDeviation=".6"/><feFlood flood-color="#fff" flood-opacity=".9"/><feComposite operator="in" in2="SourceGraphic"/></filter>
</defs>
<rect width="167" height="296.500" fill="#e9e6de"/>
<!-- sea -->
<path d="M0 0h167v69.700L157.300 58.200 138.900 44.400 122.700 32.900 121.600 39.800 115.800 41 106.600 49 104.300 57 88.200 56 77.800 57 73.200 56 72 45.500 62.800 43.200 53.600 51.300 42 50 28.300 53.600 19 58.200 0 59.400z" fill="url(#mSea)"/>
<!-- harbour basins -->
<path d="M118 49l8-8 14 10 8 10-6 4-10-8-6 2z" fill="#a3c3f4"/>
<path d="M123 33l16 11.500 14 11 4 4-3 1-14-10-13-9-5-5z" fill="#f1efe8"/>
<path d="M129 46l12 8 8 8" stroke="#f1efe8" stroke-width="1.600" fill="none"/>
<path d="M76.500 43v14" stroke="#f3f1ea" stroke-width=".9"/>
<!-- parks / greens -->
<g filter="url(#mb)">
 <path d="M0 62l14-3 8 6-6 10-16 4z" fill="#d3e3bd"/>
 <path d="M26 54l10-2 6 4-8 6z" fill="#d5e5bf"/>
 <path d="M46 52l10 1-2 6-9-2z" fill="#d0e2b6"/>
 <path d="M72 90l14-4 8 6-6 12-14 2z" fill="#cfe2b4"/>
 <path d="M56 92l8-2 2 8-9 2z" fill="#d5e5c0"/>
 <path d="M36 76l6-2 2 10-7 2z" fill="#cfe2b6"/>
 <path d="M80 62l4 0 0 8-4 0zM86 66l3 0 0 6-3 0z" fill="#c7dea8"/>
 <path d="M106 66l10-2 4 5-12 4z" fill="#d3e4bc"/>
 <path d="M140 74l12-2 4 8-12 4z" fill="#d1e3b8"/>
 <path d="M118 88l10-3 3 6-11 4z" fill="#d5e5c0"/>
 <path d="M0 98c5-2 10 1 13 9 3 9 4 18 2 26l-15 5z" fill="#cfe0b6"/><path d="M10 112l16-4 8 10-4 14-14 2z" fill="#cfe0cc" opacity=".9"/><path d="M4 126l24 2 10 10-30 6z" fill="#cfcdc6" opacity=".8"/>
 <path d="M4 104c6 6 10 16 10 28-3-9-7-19-10-28z" fill="#7f8c72" opacity=".8"/>
 
 <path d="M128 124c6-8 20-10 32-4l7 4v26l-14 2c-12-2-22-12-25-28z" fill="#bfd79c"/>
 <path d="M136 130c6 8 16 14 28 14l-6 6c-12-2-20-10-22-20z" fill="#5d6650" opacity=".75"/>
 <path d="M150 122c4 4 10 8 17 10v-6l-8-5z" fill="#a9c486"/>
 <path d="M156 147c3-2 8-1.500 9 1s-2 4-5 4-6-3-4-5z" fill="#7aa9f2"/>
 <path d="M154 104l3-3 2 4-3 3z" fill="#86b0f0"/>
 <path d="M4 152l16-4 6 8-10 10-12 0z" fill="#d3e4c0"/>
 <path d="M12 146l10-2 3 8-10 6z" fill="#c3dcc0" opacity=".9"/>
 <path d="M53 186l16-4 6 8-4 12-16 2z" fill="#cfe0b8"/>
 <path d="M55 192c6-3 12-2 16 2l-10 3z" fill="#9aa88a" opacity=".6"/>
 <path d="M88 200l20-4 18 4 6 12-10 14-22 4-12-14z" fill="#c3dbb8"/>
 <path d="M100 204l14-2 10 8-6 12-14 2z" fill="#a9c9a6" opacity=".7"/>
 <path d="M108 184l22-2 2 8-22 4z" fill="#cfe0ba"/>
 <path d="M126.500 185h12.500v6h-12.500z" fill="#ebe0aa"/>
 <path d="M75 174h8.500v7.500H75z" fill="#ebcdd4"/>
 <path d="M60 160l6-2 2 6-6 3z" fill="#cfe3b2"/>
 <path d="M18 184l6-2 2 6-6 2z" fill="#cfe3b2"/>
 <path d="M10 196l12-4 6 6-8 12-10 0z" fill="#d3e4c2"/>
 <path d="M36 206l8-2 2 6-8 4z" fill="#d2e4b8"/>
 <path d="M146 172l8-2 4 8-8 4z" fill="#cde2b0"/>
 <path d="M156 196l8-2 3 8-8 4z" fill="#cfe2b4"/>
 <path d="M140 208l6-2 2 6-6 2z" fill="#cfe2b4"/>
 <path d="M78 222l6-2 2 5-6 2z" fill="#cfe3b2"/>
 <path d="M40 232l40-2 20 6-2 8-58-2z" fill="#dbe8cc"/>
 <!-- pentlands -->
 <path d="M0 245l20-4 26 0 32 9 19 10 4 17-5 19.500H0z" fill="#b7d196"/>
 <path d="M8 262c10-6 24-4 34 4 10 6 22 4 30-2 8 4 14 12 18 20l-8 10c-8-10-18-14-30-12-12 0-22-6-30-12z" fill="#93ab74" opacity=".75"/>
 <path d="M30 270c8 2 14 8 18 16 8-6 18-8 28-4l8 6-4 6c-10-6-20-6-30 0-4-10-12-18-20-24z" fill="#56624a" opacity=".6"/>
 <path d="M60 256c8 0 14 4 18 10l-8 4c-2-6-6-10-10-14z" fill="#a9c2c0" opacity=".6"/>
 <path d="M2 250l5-5 3 2-4 9-4 2z" fill="#7aa9f2"/><path d="M16 280l4-2 2 4-3 3-3-1z" fill="#7aa9f2"/><path d="M0 264l2-1 1 5-3 2z" fill="#7aa9f2"/>
</g>
<rect x="0" y="206" width="3" height="10" fill="#7da83c"/>
<!-- railways -->
<g fill="none" stroke="#c4c4c4" stroke-width=".8"><path d="M0 165l36-14 36-12 40-10 28-2 27 4"/><path d="M88 128l24-10 30-2 25 2"/><path d="M120 100l20 4 27 6"/></g>
<!-- roads -->
<g fill="none" stroke="#fff" stroke-width="1" stroke-linecap="round" stroke-linejoin="round" opacity=".85" filter="url(#mb0)">
 <path d="M0 82l30-10 30-8 28-6 30 4 20 2 29 6" stroke-width="1.600"/>
 <path d="M0 100l24-6 30-10 22-2 30-14 24-6"/>
 <path d="M54 52l4 14 12 24 16 20 10 20"/>
 <path d="M76 57l6 24 10 24 4 24"/>
 <path d="M28 54l8 30 10 30"/>
 <path d="M104 57l10 20 10 26 12 20"/>
 <path d="M138 69l-10 24-16 24-16 16-12 6"/>
 <path d="M150 70l-6 30-10 28"/>
 <path d="M0 126l30-6 30-14 36-4 30 6 41 12" stroke-width="1.700"/>
 <path d="M96 130l30 8 20 10 21 20"/>
 <path d="M96 130l-26 8-30 14-40 14" stroke-width="1.700"/>
 <path d="M85.500 138l-2.500 50 5 25 7.400 34.400"/>
 <path d="M95.400 140.500l17.400 22.400 22.400 7.400 9.800 24.700 2.600 37.500v29.800l-12.400 34.200"/>
 <path d="M125.300 148l19.700 22.300 22 22.400"/>
 <path d="M0 181l24-12 30-8 30-2"/>
 <path d="M0 205l28-16 24-12 30-8"/>
 <path d="M46 170l12 20 14 30 10 20"/>
 <path d="M62 200l20 10 14 4"/>
 <path d="M112 163l-8 30-2 30 8 30"/>
 <path d="M135 170l-10 30 4 30 18 20"/>
 <path d="M167 230l-20 2-30-6"/>
 <path d="M0 216l20 6 30-4 30 12 15 17"/>
 <path d="M118 258l20-20 29-16"/>
 <path d="M147.600 262l10 16 9.400 8"/>
 <path d="M10 60l6 24 4 20"/>
 <path d="M120 84l20 6 27 10"/>
 <path d="M116 41l-6 16"/>
</g>
<g fill="none" stroke="#fff" stroke-width="1.500" stroke-linecap="round" stroke-linejoin="round" filter="url(#mb0)">
 <path d="M1 232.500l20 6.200 37 1.300 37.400 7.400 24.900 9.900 27.300 3.700 19.400 1.300"/>
 <path d="M96.700 247.400l6.300 19.900-7.600 29"/>
</g>
<!-- route -->
<path d="M138.200 59.400V68.600L130.800 69.300 125 75.500 115.800 77 111.200 84.700 104.300 88.200 100.800 96.200 88.200 100.800 84.700 104.300 89.300 109 85.900 118 72 122.700 65 128.500 58.200 129.600 51.300 136.500 47 138.500 42 145.500 42.500 152 41 160.400 33.300 167.800 34 172 30.800 177.800 25.800 181.500 37 185.200 38.300 191.400 32 199 30.500 204 28.300 208.800 30.500 213 29.600 217.500 23.300 223.800 11 225 1 228.700" fill="none" stroke="#5d7cf0" stroke-width="3.300" stroke-linejoin="round" stroke-linecap="round"/>
<!-- shields -->
<g font-family="Liberation Sans" font-weight="bold" font-size="6.200" fill="#f4e84a" text-anchor="middle">
 <rect x="79.400" y="74.300" width="23.600" height="8.700" fill="#7a9a2c"/><text x="91.200" y="80.900">A902</text>
 <rect x="96.700" y="250" width="22.800" height="9" fill="#7a9a2c"/><text x="108.100" y="256.800">A720</text>
 <rect x="95" y="274.300" width="23.300" height="9" fill="#7a9a2c"/><text x="106.600" y="281">A703</text>
</g>
<!-- labels -->
<g font-family="Liberation Sans">
 <text x="80" y="125" font-size="14.800" fill="#fff" stroke="#fff" stroke-width="2.400" stroke-linejoin="round" opacity=".8" textLength="70.800" lengthAdjust="spacingAndGlyphs">Edinburgh</text>
 <text x="80" y="125" font-size="14.800" fill="#414141" stroke="#414141" stroke-width=".55" textLength="70.800" lengthAdjust="spacingAndGlyphs">Edinburgh</text>
 <text x="98" y="184.800" font-size="9.300" fill="#fff" stroke="#fff" stroke-width="1.500" opacity=".7" textLength="41.700" lengthAdjust="spacingAndGlyphs">Blackford</text>
 <text x="98" y="184.800" font-size="9.300" fill="#666" textLength="41.700" lengthAdjust="spacingAndGlyphs">Blackford</text>
 <text x="154.500" y="106.300" font-size="8.500" fill="#555">Cra</text>
 <text x="133.800" y="73.200" font-size="5.500" fill="#a8a8a8" textLength="20" lengthAdjust="spacingAndGlyphs">LEITH</text>
 <text x="-7" y="231" font-size="9.300" fill="#555" textLength="28.700" lengthAdjust="spacingAndGlyphs">Green</text>
 <text x="142.700" y="296" font-size="9.300" fill="#666">Loanhead</text>
</g>
<path d="M.4 296.500V.4H167" fill="none" stroke="#fff" stroke-width=".8" opacity=".75"/><path d="M0 296H167" stroke="#fff" stroke-width="1" opacity=".8"/>
</svg>

<svg style="left:0;top:0" width="1200" height="660" viewBox="0 0 1200 660"><g fill="#000" stroke="#86b414" stroke-width="1">
<rect x="63.500" y="22.500" width="4" height="4"/><rect x="520.500" y="22.500" width="4" height="4"/><rect x="976.500" y="22.500" width="4" height="4"/>
<rect x="63.500" y="280.500" width="4" height="4"/><rect x="976.500" y="280.500" width="4" height="4"/>
<rect x="63.500" y="537.500" width="4" height="4"/><rect x="520.500" y="537.500" width="4" height="4"/><rect x="976.500" y="537.500" width="4" height="4"/>
<circle cx="522.500" cy="282.800" r="2.100" fill="#0a1400"/></g></svg>

<svg style="left:0;top:0" width="1200" height="660" viewBox="0 0 1200 660">
<use href="#iPic" x="1077.300" y="285" width="9" height="7.200"/>
<use href="#iT" x="1078" y="297.500" width="7.500" height="7.500"/>
<use href="#iPic" x="1077.300" y="310" width="9" height="7.200"/>
<use href="#iMC" x="1077" y="322.200" width="9.300" height="8.200" preserveAspectRatio="none"/>
<use href="#iMC" x="1089" y="334.800" width="9.300" height="8.200" preserveAspectRatio="none"/>
<use href="#iPic" x="1101" y="347.500" width="9" height="7.200"/>
<use href="#iM" x="1101.500" y="360.500" width="7.500" height="6.500"/>
<use href="#iRect" x="1089.500" y="372" width="8.500" height="8"/>
<use href="#iM" x="1089.500" y="385.500" width="7.500" height="6.500"/>
</svg>

<span class="t" style="left:322.0px;top:3.3px;color:#1c1c1c;letter-spacing:0.469px">Auto</span>
<span class="t" style="left:388.7px;top:3.3px;color:#1c1c1c;letter-spacing:-0.085px">Close</span>
<span class="t" style="left:1067.0px;top:20.6px;color:#1c1c1c;letter-spacing:0.028px">Properties</span>
<span class="t" style="left:1107.6px;top:22.0px;color:#1c1c1c;letter-spacing:0.584px">Common</span>
<span class="t" style="left:1147.0px;top:22.0px;color:#1c1c1c;letter-spacing:0.382px">Animation</span>
<span class="t" style="left:1069.6px;top:45.3px;color:#1c1c1c;letter-spacing:0.054px">Picture</span>
<span class="t" style="left:1111.3px;top:45.0px;color:#1c1c1c;letter-spacing:-0.025px">V:\AUDIO VISUAL\B</span>
<span class="t" style="left:1079.7px;top:62.0px;color:#1c1c1c;letter-spacing:0.272px">Main object</span>
<span class="t" style="left:1079.7px;top:84.4px;color:#1c1c1c;letter-spacing:0.079px">Edge antialiasing</span>
<span class="t" style="left:1079.7px;top:99.0px;color:#1c1c1c;letter-spacing:0.159px">Low quality of resizing</span>
<span class="t" style="left:1069.3px;top:123.4px;color:#1c1c1c;letter-spacing:0.155px">Sharper/Smoother</span>
<span class="t" style="left:1138.0px;top:123.4px;color:#1c1c1c;letter-spacing:-0.068px">-100</span>
<span class="t" style="left:1076.3px;top:147.7px;color:#1c1c1c;letter-spacing:0.200px">Adjust image and border</span>
<span class="t" style="left:1069.6px;top:258.4px;color:#2d90d2;letter-spacing:-0.201px">Save and use by default</span>
<span class="t" style="left:1090.0px;top:283.5px;color:#1c1c1c;letter-spacing:0.090px">FRAME 1920 2 stroke with shadow</span>
<span class="t" style="left:1090.0px;top:296.3px;color:#1c1c1c;letter-spacing:-0.017px">Text1</span>
<span class="t" style="left:1090.0px;top:308.5px;color:#1c1c1c;letter-spacing:-0.366px">_1090413</span>
<span class="t" style="left:1090.0px;top:321.0px;color:#1c1c1c;letter-spacing:0.170px">Mask Container</span>
<span class="t" style="left:1102.0px;top:333.5px;color:#1c1c1c;letter-spacing:0.178px">Mask Container</span>
<span class="t" style="left:1113.9px;top:346.0px;color:#1c1c1c;letter-spacing:-0.012px">Screen Shot 2015-07-08 at</span>
<span class="t" style="left:1113.9px;top:358.5px;color:#1c1c1c;letter-spacing:0.034px">Mask (Rectangle)</span>
<span class="t" style="left:1102.0px;top:371.0px;color:#1c1c1c;letter-spacing:-0.077px">Rectangle1</span>
<span class="t" style="left:1102.0px;top:383.6px;color:#1c1c1c;letter-spacing:0.040px">Mask (Rectangle)</span>
<span class="t" style="left:1065.7px;top:623.3px;color:#1c1c1c;letter-spacing:0.100px">Objects (9)</span>
<span class="t" style="left:56.3px;top:565.3px;color:#fff;letter-spacing:-0.195px;-webkit-text-stroke:0">00:00.000</span>
<span class="t" style="left:963.3px;top:565.3px;color:#f4f4f4;letter-spacing:-0.158px;-webkit-text-stroke:0">00:13.000</span>
<span class="t" style="left:56.7px;top:583.3px;color:#3a3ab4;letter-spacing:-0.494px">2000</span>
<span class="t" style="left:586.0px;top:583.3px;color:#3a3ab4;letter-spacing:-0.260px">2000</span>
<span class="t" style="left:1026.0px;top:565.0px;color:#1c1c1c">&lt;</span>
<span class="t" style="left:1045.0px;top:565.0px;color:#1c1c1c">&gt;</span>
<span class="t" style="left:1031.0px;top:583.7px;color:#1c1c1c;letter-spacing:-0.171px"><u>P</u>lay</span>
<span class="t" style="left:1026.0px;top:602.3px;color:#1c1c1c">+</span>
<span class="t" style="left:1046.0px;top:602.3px;color:#1c1c1c">-</span>
<span class="t" style="left:982.3px;top:602.5px;color:#1c1c1c;letter-spacing:0.284px">Tools</span>
<span class="t" style="left:15.0px;top:602.6px;color:#1c1c1c;letter-spacing:0.179px">Project Options</span>
<span class="t" style="left:95.0px;top:602.6px;color:#1c1c1c;letter-spacing:0.125px">Slide Options</span>
<span class="t" style="left:169.7px;top:602.6px;color:#1c1c1c;letter-spacing:0.011px">Preview</span>
<span class="t" style="left:0.5px;top:623.3px;color:#1c1c1c;letter-spacing:0.035px">Position:</span>
<span class="t" style="left:32.5px;top:623.3px;color:#1c1c1c;letter-spacing:-0.258px">00:00.000</span>
<span class="t" style="left:86.0px;top:623.3px;color:#1c1c1c;letter-spacing:0.137px">Full duration:</span>
<span class="t" style="left:133.3px;top:623.3px;color:#1c1c1c;letter-spacing:-0.314px">9.584 s</span>
<span class="t" style="left:188.5px;top:623.3px;color:#1c1c1c;letter-spacing:-0.002px">V:\AUDIO VISUAL\BPCC\WATER of LEITH\LEITH MASTER FOLDER\PTE Assets\FRAME 1920 2 stroke with shadow.png</span>
<span class="t" style="left:1157.0px;top:638.0px;color:#fff;letter-spacing:-0.191px;-webkit-text-stroke:0">18:34</span>
<span class="t" style="left:1147.0px;top:648.6px;color:#fff;letter-spacing:0.109px;-webkit-text-stroke:0">14/07/2015</span>
</body></html>
